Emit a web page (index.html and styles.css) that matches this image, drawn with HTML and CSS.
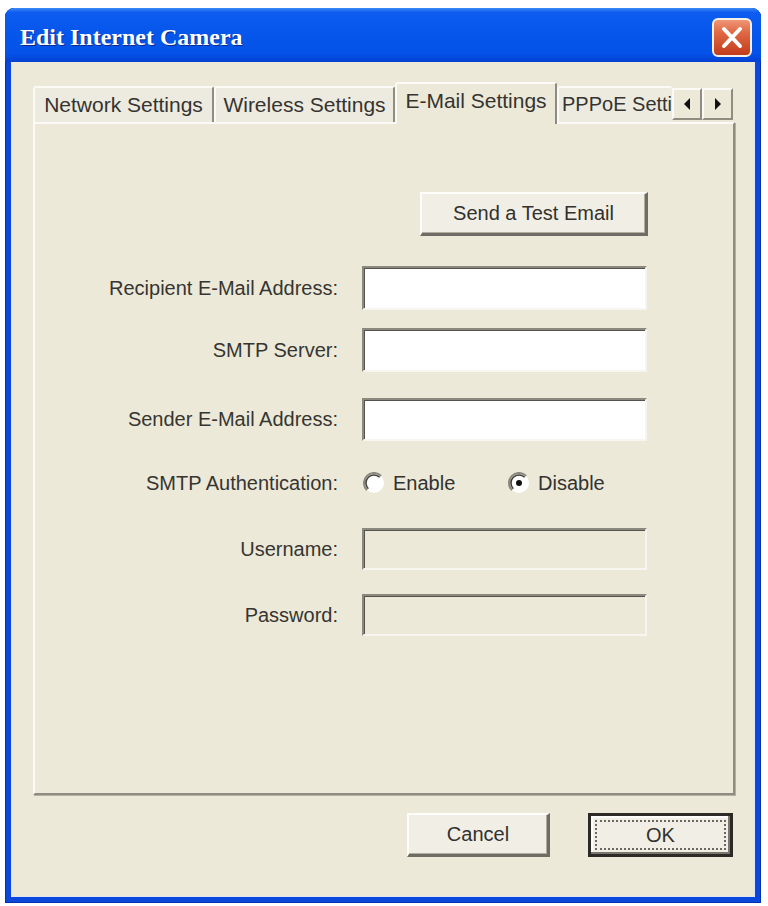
FILE: index.html
```html
<!DOCTYPE html>
<html>
<head>
<meta charset="utf-8">
<title>Edit Internet Camera</title>
<link rel="stylesheet" href="styles.css">
</head>
<body>
<div class="window">
  <div class="titlebar">
    <span class="title">Edit Internet Camera</span>
    <span class="close">
      <svg width="40" height="39" viewBox="0 0 40 39">
        <defs>
          <linearGradient id="cg" x1="0" y1="0" x2="0" y2="1">
            <stop offset="0" stop-color="#f09a7c"/>
            <stop offset="0.35" stop-color="#e06a45"/>
            <stop offset="1" stop-color="#c13a1a"/>
          </linearGradient>
        </defs>
        <rect x="1" y="1" width="38" height="37" rx="5" ry="5" fill="url(#cg)" stroke="#f4f0ea" stroke-width="2"/>
        <path d="M12 11 L28 28 M28 11 L12 28" stroke="#ffffff" stroke-width="4" stroke-linecap="round"/>
      </svg>
    </span>
  </div>
  <div class="client">
    <div class="tabs">
      <div class="tab">Network Settings</div>
      <div class="tab">Wireless Settings</div>
      <div class="tab active">E-Mail Settings</div>
      <div class="tab clip">PPPoE Setti</div>
      <div class="scroller">
        <span class="arr"><svg width="10" height="12" viewBox="0 0 10 12"><path d="M8 0 L2 6 L8 12 Z" fill="#111"/></svg></span>
        <span class="arr"><svg width="10" height="12" viewBox="0 0 10 12"><path d="M2 0 L8 6 L2 12 Z" fill="#111"/></svg></span>
      </div>
    </div>
    <div class="panel">
      <div class="test-row"><span class="btn test">Send a Test Email</span></div>
      <div class="row r1"><span class="label">Recipient E-Mail Address:</span><span class="field"></span></div>
      <div class="row r2"><span class="label">SMTP Server:</span><span class="field"></span></div>
      <div class="row r3"><span class="label">Sender E-Mail Address:</span><span class="field"></span></div>
      <div class="row r4">
        <span class="label">SMTP Authentication:</span>
        <span class="opt first">
          <svg class="radio" width="22" height="22" viewBox="0 0 22 22">
            <circle cx="11" cy="11" r="10" fill="#fff"/>
            <path d="M3.9 18.1 A10 10 0 0 1 18.1 3.9" fill="none" stroke="#8a877c" stroke-width="2"/>
            <path d="M5.3 16.7 A8 8 0 0 1 16.7 5.3" fill="none" stroke="#3f3e3a" stroke-width="1.6"/>
          </svg>
          <span>Enable</span>
        </span>
        <span class="opt">
          <svg class="radio" width="22" height="22" viewBox="0 0 22 22">
            <circle cx="11" cy="11" r="10" fill="#fff"/>
            <path d="M3.9 18.1 A10 10 0 0 1 18.1 3.9" fill="none" stroke="#8a877c" stroke-width="2"/>
            <path d="M5.3 16.7 A8 8 0 0 1 16.7 5.3" fill="none" stroke="#3f3e3a" stroke-width="1.6"/>
            <circle cx="11" cy="11" r="3" fill="#111"/>
          </svg>
          <span>Disable</span>
        </span>
      </div>
      <div class="row r5"><span class="label">Username:</span><span class="field disabled"></span></div>
      <div class="row r6"><span class="label">Password:</span><span class="field disabled"></span></div>
    </div>
    <div class="footer">
      <span class="btn cancel">Cancel</span>
      <span class="btn ok"><span class="focus">OK</span></span>
    </div>
  </div>
</div>
</body>
</html>
```

FILE: styles.css
```css
html, body {
  margin: 0;
  padding: 0;
  background: #ffffff;
}

body {
  font-family: "Liberation Sans", Arial, sans-serif;
  color: #333230;
}

.window {
  margin: 8px 0 0 5px;
  width: 756px;
  height: 895px;
  display: flex;
  flex-direction: column;
  background: #0b47d9;
  border-radius: 9px 9px 0 0;
  box-shadow: inset 0 0 0 1px #0030b4;
}

.titlebar {
  flex: none;
  height: 54px;
  display: flex;
  align-items: flex-start;
  padding-left: 15px;
  border-radius: 9px 9px 0 0;
  background: linear-gradient(to bottom, #3d8af7 0%, #0e5cf0 8%, #0757ec 40%, #0452e8 85%, #0440d0 100%);
}

.title {
  margin-top: 15px;
  font-family: "Liberation Serif", "Times New Roman", serif;
  font-weight: 700;
  font-size: 24px;
  line-height: 28px;
  color: #ffffff;
  text-shadow: 1px 1px 0 #0a2a8c;
}

.close {
  margin-left: auto;
  margin-right: 9px;
  margin-top: 10px;
  width: 40px;
  height: 39px;
  display: block;
}

.close svg {
  display: block;
}

.client {
  flex: 1;
  margin: 0 6px 6px 6px;
  background: #ece9d8;
  padding: 20px 20px 0 22px;
  display: flex;
  flex-direction: column;
  box-shadow: inset 1px 0 0 #dfe6f8, inset -1px 0 0 #dfe6f8, inset 0 -1px 0 #dfe6f8;
}

.tabs {
  flex: none;
  height: 40px;
  display: flex;
  align-items: flex-end;
  position: relative;
  z-index: 2;
  font-size: 21px;
}

.tab {
  box-sizing: border-box;
  flex: none;
  width: 181px;
  height: 36px;
  background: #edebdf;
  border-top: 2px solid #fbfaf6;
  border-left: 2px solid #fbfaf6;
  border-right: 2px solid #8f8c80;
  border-radius: 3px 3px 0 0;
  text-align: center;
  line-height: 33px;
  white-space: nowrap;
  color: #353431;
}

.tab.active {
  width: 162px;
  height: 42px;
  margin-bottom: -2px;
  background: #ece9d8;
  line-height: 34px;
}

.tab.clip {
  flex: 1 1 auto;
  width: auto;
  min-width: 0;
  overflow: hidden;
  text-align: left;
  padding-left: 3px;
  font-size: 20px;
  border-right: none;
}

.scroller {
  flex: none;
  align-self: flex-start;
  margin-top: 6px;
  margin-right: 2px;
  display: flex;
  height: 32px;
}

.arr {
  box-sizing: border-box;
  width: 30px;
  height: 32px;
  background: #ece9d8;
  border-top: 2px solid #fbfaf6;
  border-left: 2px solid #fbfaf6;
  border-right: 2px solid #8f8c80;
  border-bottom: 2px solid #8f8c80;
  display: flex;
  align-items: center;
  justify-content: center;
}

.arr + .arr {
  width: 31px;
}

.arr svg {
  display: block;
}

.panel {
  flex: none;
  box-sizing: border-box;
  height: 673px;
  background: #ece9d8;
  border-top: 2px solid #fbfaf6;
  border-left: 2px solid #fbfaf6;
  border-right: 2px solid #8f8c80;
  border-bottom: 2px solid #8f8c80;
  box-shadow: 1px 1px 0 #b3b0a3;
  padding-top: 68px;
  font-size: 20px;
}

.test-row {
  display: flex;
  padding-left: 385px;
}

.btn {
  box-sizing: border-box;
  display: flex;
  align-items: center;
  justify-content: center;
  height: 44px;
  background: #f1efe5;
  border-style: solid;
  border-width: 2px 3px 3px 2px;
  border-color: #fdfdfb #6e6c64 #6e6c64 #fdfdfb;
  box-shadow: inset -1px -1px 0 #b0ad9f;
  font-size: 20px;
  color: #32312e;
  white-space: nowrap;
}

.btn.test {
  width: 228px;
}

.row {
  display: flex;
  align-items: center;
}

.label {
  flex: none;
  width: 303px;
  margin-right: 24px;
  text-align: right;
  white-space: nowrap;
  color: #363532;
}

.field {
  flex: none;
  box-sizing: border-box;
  width: 285px;
  height: 100%;
  background: #ffffff;
  border-style: solid;
  border-width: 2px;
  border-color: #8c897e #f6f5f0 #f6f5f0 #8c897e;
  box-shadow: inset 1px 1px 0 #55534d;
}

.field.disabled {
  background: #ece9d8;
}

.r1 { margin-top: 30px; height: 44px; }
.r2 { margin-top: 18px; height: 44px; }
.r3 { margin-top: 26px; height: 43px; }
.r4 { margin-top: 20px; height: 44px; }
.r5 { margin-top: 23px; height: 42px; }
.r6 { margin-top: 24px; height: 42px; }

.r4 .label {
  margin-right: 25px;
}

.opt {
  display: flex;
  align-items: center;
  gap: 8px;
  white-space: nowrap;
}

.opt.first {
  width: 145px;
}

.radio {
  display: block;
  flex: none;
}

.footer {
  display: flex;
  justify-content: flex-end;
  gap: 38px;
  margin-top: 18px;
  margin-right: 2px;
}

.btn.cancel {
  width: 143px;
}

.btn.ok {
  width: 145px;
  border: 3px solid #2b2a27;
  box-shadow: inset -2px -2px 0 #7a776e, inset 2px 2px 0 #fdfdfb;
  padding: 4px;
}

.focus {
  box-sizing: border-box;
  flex: 1;
  align-self: stretch;
  display: flex;
  align-items: center;
  justify-content: center;
  border: 2px dotted #6a6862;
}
```
